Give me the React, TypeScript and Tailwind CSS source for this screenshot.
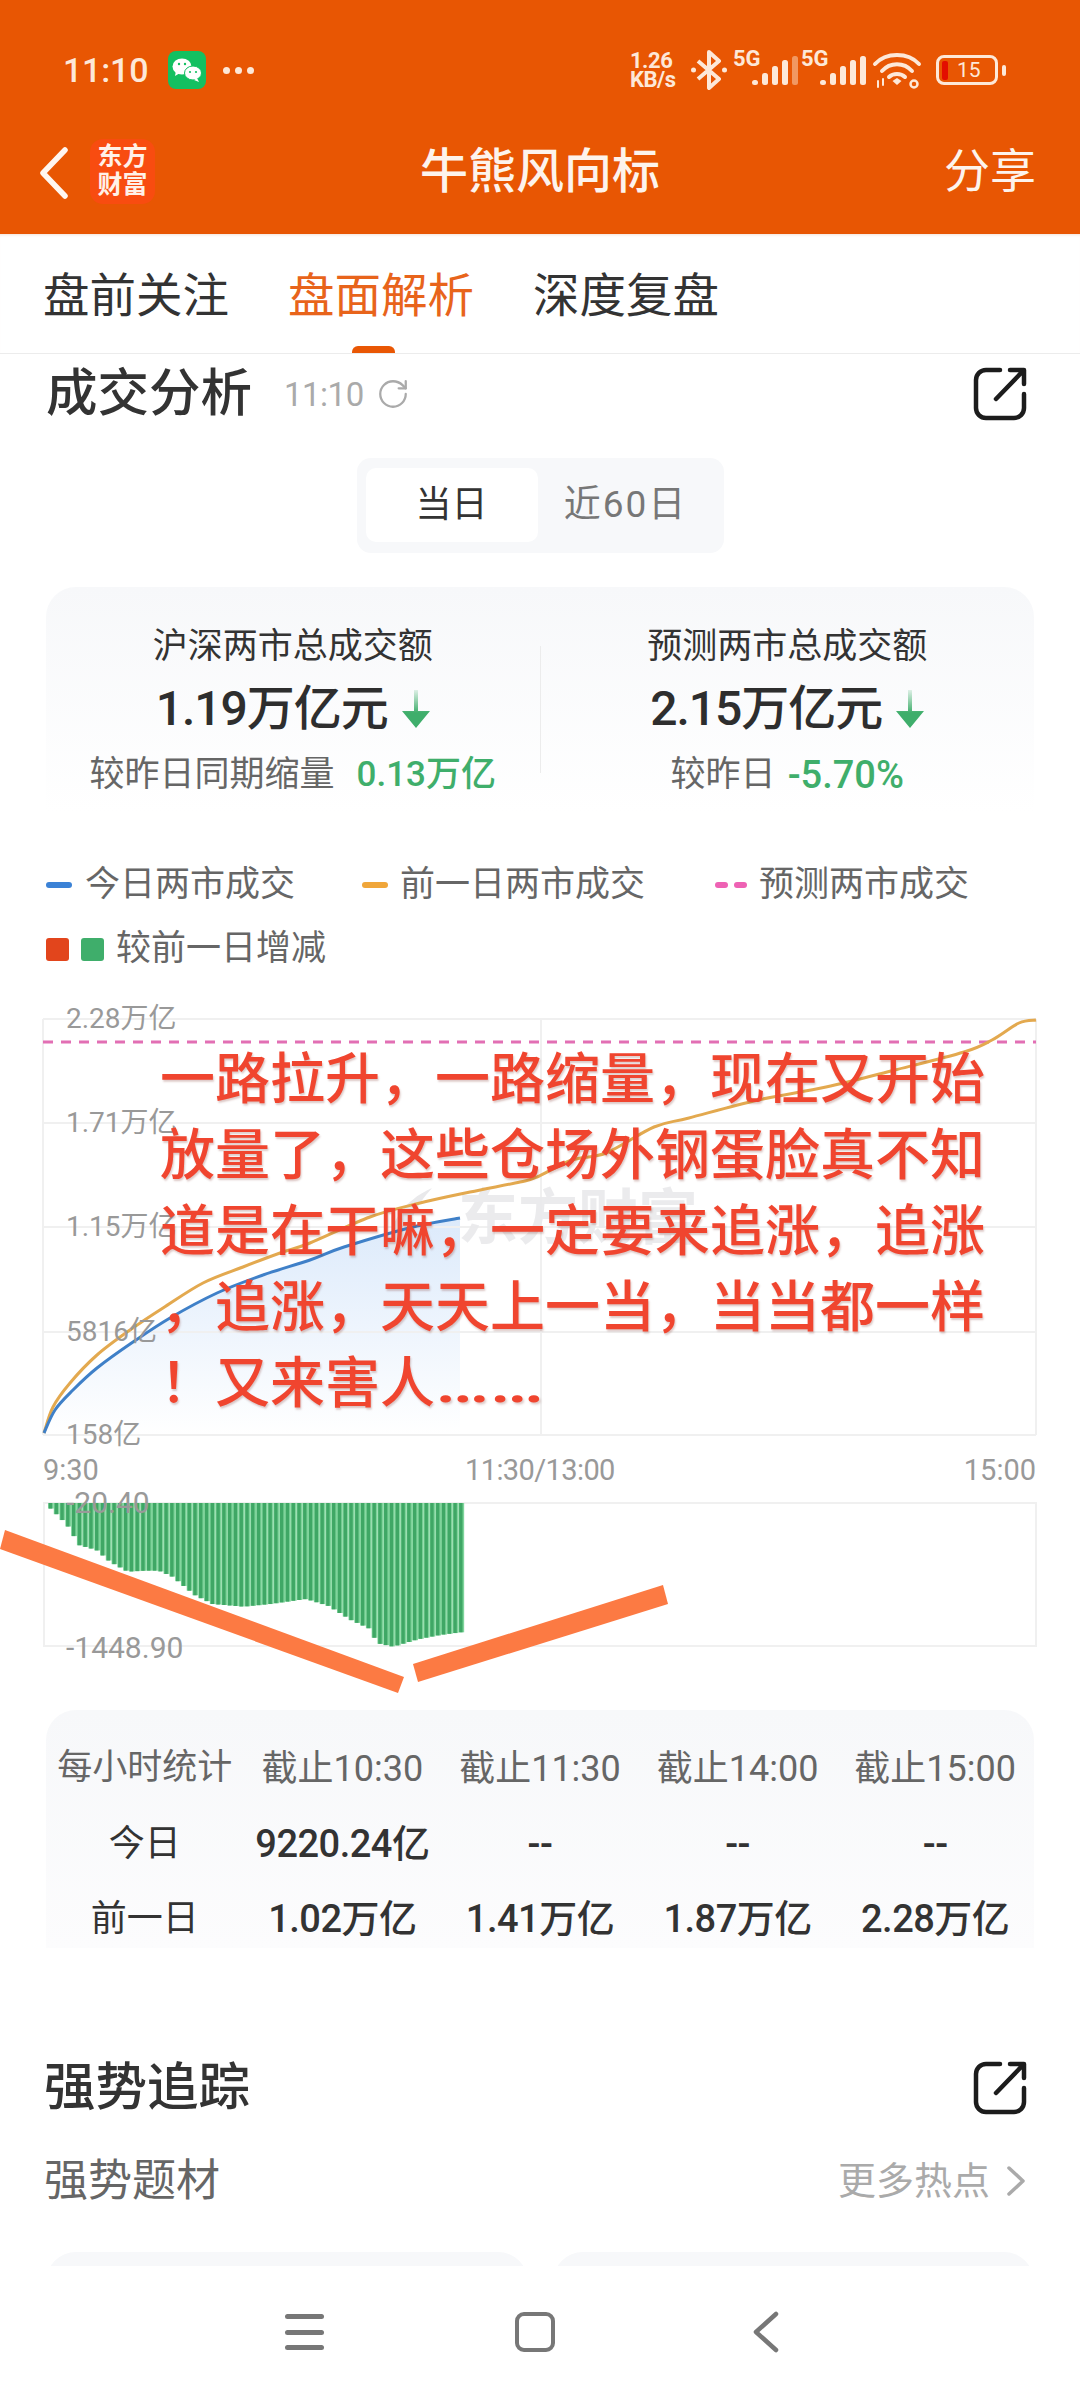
import React from "react";
import { RotateCw } from "lucide-react";

const smooth = (p: number[][]) => {
  let d = `M${p[0][0]} ${p[0][1]}`;
  for (let i = 0; i < p.length - 1; i++) {
    const a = p[Math.max(i - 1, 0)];
    const b = p[i];
    const c = p[i + 1];
    const e = p[Math.min(i + 2, p.length - 1)];
    const c1 = [b[0] + (c[0] - a[0]) / 6, b[1] + (c[1] - a[1]) / 6];
    const c2 = [c[0] - (e[0] - b[0]) / 6, c[1] - (e[1] - b[1]) / 6];
    d += `C${c1[0].toFixed(1)} ${c1[1].toFixed(1)} ${c2[0].toFixed(1)} ${c2[1].toFixed(1)} ${c[0]} ${c[1]}`;
  }
  return d;
};

const todayLine = [[44,1433],[55,1410],[73,1390],[97,1368],[133,1342],[170,1318],[217,1293],[263,1275],[310,1260],[344,1247],[413,1227],[460,1218]];
const prevLine = [[44,1433],[53,1407],[70,1383],[97,1355],[130,1330],[163,1308],[203,1283],[243,1267],[280,1253],[310,1243],[370,1217],[420,1203],[470,1192],[520,1182],[537,1177],[572,1160],[606,1153],[654,1127],[689,1118],[758,1100],[826,1087],[895,1070],[964,1052],[992,1040],[1019,1023],[1036,1020]];

const profile = [[107,85],[130,115],[150,145],[170,195],[210,210],[240,245],[280,275],[320,272],[350,272],[380,290],[430,345],[470,372],[540,380],[600,372],[680,357],[730,378],[780,420],[820,445],[840,490],[875,500],[930,478],[980,465],[1038,455]];
const depth = (zx: number) => {
  for (let i = 1; i < profile.length; i++) {
    if (zx <= profile[i][0]) {
      const [a, b] = profile[i - 1];
      const [c, d] = profile[i];
      return b + ((d - b) * (zx - a)) / (c - a);
    }
  }
  return 455;
};
const bars = Array.from({ length: 72 }, (_, i) => {
  const x = 48 + i * 5.78;
  return { x, h: depth(x * 2.24) / 3 + 1480 - 1503 };
});

function ShareIcon() {
  return (
    <svg width="54" height="54" viewBox="0 0 54 54" fill="none" stroke="#1c1c1c" strokeWidth="4.5" strokeLinecap="round" strokeLinejoin="round">
      <path d="M27 3H13a10 10 0 0 0-10 10v28a10 10 0 0 0 10 10h28a10 10 0 0 0 10-10V27" />
      <path d="M23 32L50 4M37 3h14v14" />
    </svg>
  );
}

function DownArrow() {
  return (
    <svg width="28" height="38" viewBox="0 0 28 38" className="ml-[14px]">
      <defs>
        <linearGradient id="ag" x1="0" y1="0" x2="0" y2="1">
          <stop offset="0" stopColor="#3fae6b" stopOpacity="0.15" />
          <stop offset="0.6" stopColor="#3fae6b" />
        </linearGradient>
      </defs>
      <path d="M12 0h4v21h12L14 38 0 21h12z" fill="url(#ag)" />
    </svg>
  );
}

function Signal({ faded }: { faded?: boolean }) {
  const hs = [5, 12, 19, 25, 29];
  return (
    <div className="relative w-[66px] h-[38px]">
      <span className="absolute left-0 top-[-3px] text-[22px] leading-[22px] font-bold text-[#fde8d8]">5G</span>
      <svg width="66" height="38" viewBox="0 0 66 38" className="absolute left-0 top-0">
        {hs.map((h, i) => (
          <rect key={i} x={19 + i * 10} y={34 - h} width="6" height={h} rx="2.5" fill="#fde8d8" opacity={faded && i === 4 ? 0.45 : 1} />
        ))}
      </svg>
    </div>
  );
}

function StatusBar() {
  return (
    <div className="h-[112px] pt-[28px] flex items-center text-[#fde8d8]">
      <span className="ml-[63px] w-[86px] text-[34px] leading-none font-medium tracking-[-0.2px]">11:10</span>
      <svg width="38" height="38" viewBox="0 0 38 38" className="ml-[19px]">
        <rect width="38" height="38" rx="8" fill="#13c061" />
        <ellipse cx="14" cy="15.5" rx="9.5" ry="8" fill="#fff" />
        <path d="M8 20l-1 5 5-3z" fill="#fff" />
        <ellipse cx="25" cy="22" rx="8.5" ry="7" fill="#fff" stroke="#13c061" strokeWidth="1" />
        <path d="M29 27l2 4-5-2z" fill="#fff" />
        <circle cx="11" cy="13" r="1.2" fill="#13c061" />
        <circle cx="17" cy="13" r="1.2" fill="#13c061" />
        <circle cx="22" cy="21" r="1.1" fill="#13c061" />
        <circle cx="28" cy="21" r="1.1" fill="#13c061" />
      </svg>
      <div className="ml-[17px] flex gap-[5px]">
        <span className="w-[7px] h-[7px] rounded-full bg-[#fde8d8]" />
        <span className="w-[7px] h-[7px] rounded-full bg-[#fde8d8]" />
        <span className="w-[7px] h-[7px] rounded-full bg-[#fde8d8]" />
      </div>
      <div className="ml-[376px] w-[52px] flex flex-col font-bold text-[22px] leading-[19px] tracking-[-0.5px]">
        <span>1.26</span>
        <span>KB/s</span>
      </div>
      <svg width="38" height="40" viewBox="0 0 38 40" fill="none" stroke="#fde8d8" strokeWidth="4" className="ml-[8px]">
        <path d="M8 11l21 18-10 9V2l10 9L8 29" strokeLinejoin="round" />
        <circle cx="3.5" cy="20" r="2.5" fill="#fde8d8" stroke="none" />
        <circle cx="34.5" cy="20" r="2.5" fill="#fde8d8" stroke="none" />
      </svg>
      <div className="ml-[5px]"><Signal faded /></div>
      <div className="ml-[2px]"><Signal /></div>
      <svg width="50" height="38" viewBox="0 0 50 38" fill="none" stroke="#fde8d8" strokeWidth="4" strokeLinecap="round" className="ml-[5px]">
        <path d="M3 13C14 1 36 1 47 13" />
        <path d="M10 20C18 11 32 11 40 20" />
        <path d="M17 26C21 22 29 22 33 26" />
        <path d="M20.5 30l4.5-3 4.5 3-4.5 4z" fill="#fde8d8" stroke="none" />
        <path d="M6 30v6M11 28v6" strokeWidth="2" />
        <circle cx="42" cy="33" r="3.5" strokeWidth="2.5" />
      </svg>
      <div className="ml-[14px] relative w-[62px] h-[30px] rounded-[8px] border-[3px] border-[#fde8d8] flex items-center">
        <span className="ml-[3px] w-[6px] h-[19px] rounded-[2px] bg-[#e30e00]" />
        <span className="ml-[9px] text-[21px] leading-none">15</span>
      </div>
      <span className="ml-[4px] w-[4px] h-[11px] rounded-full bg-[#fde8d8]" />
    </div>
  );
}

function NavBar() {
  return (
    <div className="h-[122px] grid grid-cols-[1fr_auto_1fr] items-center text-[#fdf3ec]">
      <div className="flex items-center">
        <svg width="30" height="52" viewBox="0 0 30 52" fill="none" stroke="#fff6f0" strokeWidth="5.5" strokeLinecap="round" strokeLinejoin="round" className="ml-[39px]">
          <path d="M26 3L4 26l22 23" />
        </svg>
        <div className="ml-[21px] w-[65px] h-[65px] rounded-[13px] bg-[#f84c10] flex flex-col items-center justify-center font-bold text-[25px] leading-[28px] text-[#fff1e8] mt-[-4px]">
          <span>东方</span>
          <span>财富</span>
        </div>
      </div>
      <div className="text-[48px] leading-none font-medium mt-[-2px]">牛熊风向标</div>
      <div className="justify-self-end mr-[44px] text-[46px] leading-none mt-[-4px]">分享</div>
    </div>
  );
}

function Tabs() {
  return (
    <div className="h-[120px] border-b border-[#ececec] flex pl-[43px] gap-[59px] text-[46.5px] text-[#333] shadow-[inset_0_3px_3px_-2px_#f3e2d8]">
      <div className="h-full flex items-center pt-[7px]">盘前关注</div>
      <div className="relative h-full flex items-center pt-[7px] text-[#e8641b]">
        盘面解析
        <span className="absolute left-[64px] bottom-0 w-[43px] h-[7px] rounded-t-[6px] bg-[#e95704]" />
      </div>
      <div className="h-full flex items-center pt-[7px]">深度复盘</div>
    </div>
  );
}

function Stat({ title, value, label, delta, delta2 }: { title: string; value: string; label: string; delta: string; delta2: string }) {
  return (
    <div className="flex-1 pt-[38px] flex flex-col items-center">
      <div className="h-[44px] flex items-center text-[35px] text-[#333]">{title}</div>
      <div className="h-[78px] flex items-center text-[48px] font-medium text-[#2e2e2e] tracking-[-1px] pt-[2px]">
        {value}
        <DownArrow />
      </div>
      <div className="h-[56px] flex items-center text-[35px] text-[#666]">
        {label}
        <span className={delta2}>{delta}</span>
      </div>
    </div>
  );
}

function Legend() {
  return (
    <div className="mt-[40px] ml-[46px] text-[35px] text-[#666]">
      <div className="h-[64px] flex items-center">
        <span className="w-[26px] h-[6px] rounded-full bg-[#3b82d6]" />
        <span className="ml-[13px]">今日两市成交</span>
        <span className="ml-[67px] w-[26px] h-[6px] rounded-full bg-[#f0a63a]" />
        <span className="ml-[12px]">前一日两市成交</span>
        <span className="ml-[70px] w-[13px] h-[6px] rounded-full bg-[#ee62b4]" />
        <span className="ml-[6px] w-[13px] h-[6px] rounded-full bg-[#ee62b4]" />
        <span className="ml-[12px]">预测两市成交</span>
      </div>
      <div className="h-[64px] flex items-center">
        <span className="w-[23px] h-[23px] rounded-[3px] bg-[#e2451c]" />
        <span className="ml-[12px] w-[23px] h-[23px] rounded-[3px] bg-[#3fae6b]" />
        <span className="ml-[12px]">较前一日增减</span>
      </div>
    </div>
  );
}

const yLabels = [
  { t: "2.28万亿", c: "top-[20px]" },
  { t: "1.71万亿", c: "top-[124px]" },
  { t: "1.15万亿", c: "top-[228px]" },
  { t: "5816亿", c: "top-[333px]" },
  { t: "158亿", c: "top-[436px]" },
];

const note = [
  "一路拉升，一路缩量，现在又开始",
  "放量了，这些仓场外钢蛋脸真不知",
  "道是在干嘛，一定要来追涨，追涨",
  "，追涨，天天上一当，当当都一样",
];

function LineChart() {
  return (
    <div className="relative h-[514px]">
      <svg width="1080" height="514" viewBox="0 981 1080 514" fill="none" className="absolute left-0 top-0">
        <defs>
          <linearGradient id="area" x1="0" y1="0" x2="0" y2="1">
            <stop offset="0" stopColor="#dceafb" />
            <stop offset="1" stopColor="#ffffff" />
          </linearGradient>
        </defs>
        <path d={`${smooth(todayLine)}L460 1435L44 1435Z`} fill="url(#area)" />
        <g stroke="#f0f0f0" strokeWidth="2">
          <path d="M43 1019H1036M43 1123H1036M43 1227H1036M43 1332H1036M43 1435H1036" />
          <path d="M43 1019V1435M541 1019V1435M1036 1019V1435" />
        </g>
        <path d="M432 1188C404 1200 386 1226 391 1250L410 1250C404 1226 416 1206 432 1188Z" fill="#e9e9eb" />
        <path d="M43 1042H1036" stroke="#e26fb4" strokeWidth="3" strokeDasharray="10 8" />
      </svg>
      <div className="absolute left-[458px] top-[208px] text-[60px] font-bold leading-none text-[#e9e9eb]/90">东方财富</div>
      <svg width="1080" height="514" viewBox="0 981 1080 514" fill="none" className="absolute left-0 top-0">
        <path d={smooth(prevLine)} stroke="#e3a94f" strokeWidth="3" />
        <path d={smooth(todayLine)} stroke="#3f80c8" strokeWidth="3" />
      </svg>
      {yLabels.map((l) => (
        <span key={l.t} className={`absolute left-[66px] ${l.c} h-[36px] flex items-center text-[28px] text-[#999] leading-none`}>
          {l.t}
        </span>
      ))}
      <span className="absolute left-[43px] top-[472px] text-[29px] leading-[34px] text-[#999]">9:30</span>
      <span className="absolute left-[465px] top-[472px] text-[29px] leading-[34px] text-[#999] tracking-[-0.6px]">11:30/13:00</span>
      <span className="absolute right-[44px] top-[472px] text-[29px] leading-[34px] text-[#999]">15:00</span>
      <div className="absolute left-[160px] top-[60px] text-[55px] leading-[76px] font-medium text-[#f0452f] whitespace-nowrap [text-shadow:1px_2px_2px_rgba(120,40,30,0.25)]">
        {note.map((n) => (
          <div key={n}>{n}</div>
        ))}
        <div>
          ！又来害人<span className="inline-block origin-left scale-x-[1.4]">……</span>
        </div>
      </div>
    </div>
  );
}

function BarChart() {
  return (
    <div className="relative h-[205px]">
      <svg width="1080" height="205" viewBox="0 1495 1080 205" fill="none" className="absolute left-0 top-0">
        <path d="M44 1503H1036V1646H44z" stroke="#f0f0f0" strokeWidth="2" />
        {bars.map((b) => (
          <g key={b.x}>
            <rect x={b.x} y="1503" width="5.78" height={b.h} fill="#7fd49b" />
            <rect x={b.x + 0.8} y="1503" width="3.4" height={b.h} fill="#3fa765" />
          </g>
        ))}
        <polygon points="5,1530 404,1677 398,1693 0,1549" fill="#fc7a43" />
        <polygon points="413,1664 663,1585 668,1604 418,1682" fill="#fc7a43" />
      </svg>
      <span className="absolute left-[66px] top-[-9px] h-[34px] flex items-center text-[30px] text-[#999] leading-none">-20.40</span>
      <span className="absolute left-[66px] top-[136px] h-[34px] flex items-center text-[30px] text-[#999] leading-none">-1448.90</span>
    </div>
  );
}

const rows = [
  { c: "h-[75px] text-[#666]", v: ["每小时统计", "截止10:30", "截止11:30", "截止14:00", "截止15:00"] },
  { c: "h-[76px] text-[#333]", v: ["今日", "9220.24亿", "--", "--", "--"] },
  { c: "h-[66px] text-[#333]", v: ["前一日", "1.02万亿", "1.41万亿", "1.87万亿", "2.28万亿"] },
];

function HourTable() {
  return (
    <div className="mt-[10px] mx-[46px] h-[238px] pt-[21px] rounded-t-[30px] bg-linear-to-b from-[#f7f8fa] to-[#fcfcfd]">
      {rows.map((r, ri) => (
        <div key={ri} className={`grid grid-cols-5 ${r.c}`}>
          {r.v.map((v, i) => (
            <div
              key={i}
              className={`flex items-center justify-center whitespace-nowrap ${
                ri === 0 ? (i === 0 ? "text-[35px]" : "text-[36px]") : i === 0 ? "text-[36px]" : "text-[38px] font-medium tracking-[-0.5px]"
              } ${ri === 2 ? "pt-[8px]" : ""}`}
            >
              {v}
            </div>
          ))}
        </div>
      ))}
    </div>
  );
}

function BottomNav() {
  return (
    <div className="absolute left-0 right-0 bottom-0 h-[134px] bg-white">
      <div className="flex items-center h-full pb-[2px]">
        <div className="ml-[285px] w-[39px] h-[36px] flex flex-col justify-between">
          <span className="h-[5px] rounded-full bg-[#777]" />
          <span className="h-[5px] rounded-full bg-[#777]" />
          <span className="h-[5px] rounded-full bg-[#777]" />
        </div>
        <div className="ml-[191px] w-[40px] h-[40px] rounded-[9px] border-[4px] border-[#777]" />
        <svg width="28" height="42" viewBox="0 0 28 42" fill="none" stroke="#777" strokeWidth="4.5" strokeLinecap="round" strokeLinejoin="round" className="ml-[197px]">
          <path d="M24 3L4 21l20 18" />
        </svg>
      </div>
    </div>
  );
}

export default function App() {
  return (
    <div className="relative w-[1080px] h-[2400px] overflow-hidden bg-white font-[Roboto,'Noto_Sans_CJK_SC',sans-serif]">
      <header className="h-[234px] bg-[#e85603]">
        <StatusBar />
        <NavBar />
      </header>
      <Tabs />
      <main>
        <div className="h-[80px] mx-[46px] flex items-center">
          <h2 className="text-[51.5px] font-medium text-[#333] leading-none">成交分析</h2>
          <span className="ml-[32px] text-[33px] text-[#aaa] leading-none tracking-[-0.5px]">11:10</span>
          <RotateCw className="ml-[12px]" size={34} color="#aaa" strokeWidth={1.6} />
          <div className="ml-auto mr-[7px]"><ShareIcon /></div>
        </div>
        <div className="mt-[24px] mx-auto w-[367px] h-[95px] rounded-[14px] bg-[#f7f8fa] p-[10px] pl-[9px] flex">
          <div className="w-[172px] h-[74px] rounded-[10px] bg-white flex items-center justify-center text-[36px] text-[#333]">当日</div>
          <div className="flex-1 h-[74px] flex items-center justify-center text-[37px] text-[#777] tracking-[2px]">近60日</div>
        </div>
        <div className="mt-[34px] mx-[46px] h-[226px] rounded-t-[30px] bg-linear-to-b from-[#f7f8fa] to-white flex">
          <Stat title="沪深两市总成交额" value="1.19万亿元" label="较昨日同期缩量" delta="0.13万亿" delta2="ml-[22px] font-medium text-[#3fae6b]" />
          <div className="w-px h-[127px] mt-[59px] bg-[#ececec]" />
          <Stat title="预测两市总成交额" value="2.15万亿元" label="较昨日" delta="-5.70%" delta2="ml-[12px] font-medium text-[38px] text-[#3fae6b]" />
        </div>
        <Legend />
        <LineChart />
        <BarChart />
        <HourTable />
        <div className="mt-[100px] h-[80px] ml-[44px] mr-[46px] flex items-center justify-between">
          <h2 className="text-[51.5px] font-medium text-[#333] leading-none">强势追踪</h2>
          <div className="mr-[7px]"><ShareIcon /></div>
        </div>
        <div className="mt-[23px] h-[60px] ml-[44px] mr-[46px] flex items-center">
          <span className="text-[44px] text-[#666]">强势题材</span>
          <span className="ml-auto text-[38px] text-[#aaa]">更多热点</span>
          <svg width="20" height="32" viewBox="0 0 20 32" fill="none" stroke="#aaa" strokeWidth="3.5" strokeLinecap="round" strokeLinejoin="round" className="ml-[16px] mr-[8px]">
            <path d="M3 3l14 13L3 29" />
          </svg>
        </div>
        <div className="mt-[41px] mx-[46px] flex gap-[25px]">
          <div className="flex-1 h-[100px] rounded-t-[30px] bg-[#f7f8fa]" />
          <div className="flex-1 h-[100px] rounded-t-[30px] bg-[#f7f8fa]" />
        </div>
      </main>
      <BottomNav />
    </div>
  );
}
